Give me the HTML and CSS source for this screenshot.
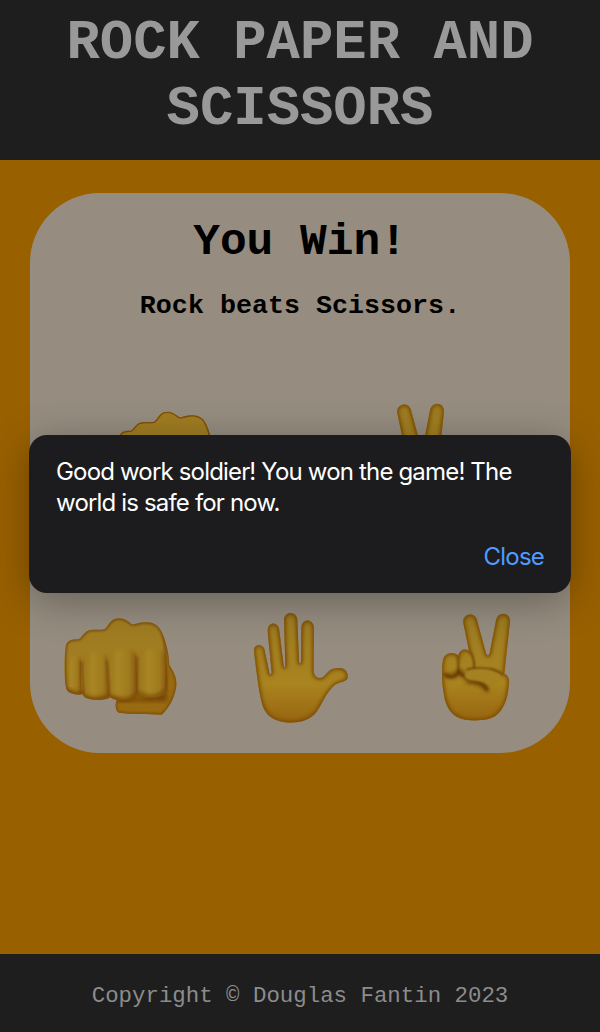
FILE: index.html
```html
<!DOCTYPE html>
<html lang="en">
<head>
<meta charset="utf-8">
<title>Rock Paper and Scissors</title>
<link rel="stylesheet" href="styles.css">
</head>
<body>
<svg class="defs" aria-hidden="true">
  <defs>
    <linearGradient id="skin" x1="0" y1="0" x2="0" y2="1">
      <stop offset="0" stop-color="#9d7d24"/>
      <stop offset=".65" stop-color="#a9841f"/>
      <stop offset="1" stop-color="#98650f"/>
    </linearGradient>
    <linearGradient id="knuckle" x1="0" y1="0" x2="1" y2="0">
      <stop offset="0" stop-color="#97701a"/>
      <stop offset=".4" stop-color="#a98624"/>
      <stop offset=".75" stop-color="#a07a1e"/>
      <stop offset="1" stop-color="#86540f"/>
    </linearGradient>
    <filter id="soft" x="-20%" y="-20%" width="140%" height="140%"><feGaussianBlur stdDeviation="6"/></filter>
    <filter id="line" x="-50%" y="-20%" width="200%" height="140%"><feGaussianBlur stdDeviation="2.5"/></filter>
    <path id="fist-shape" d="M50 146C50 125 62 117 88 118C96 117 104 96 121 91C138 87 158 91 166 88C176 83 180 64 197 57C218 50 236 62 246 71C255 78 262 68 285 67C315 64 333 79 341 103C350 127 360 156 361 195C372 211 385 235 382 258C377 293 363 321 338 344C296 341 247 344 211 338C198 334 197 306 205 299C196 299 190 297 184 292C170 303 128 301 112 294C105 291 102 286 101 282C86 287 64 283 54 271C45 253 45 173 50 146Z"/>
    <clipPath id="fist-clip"><use href="#fist-shape"/></clipPath>
    <path id="palm-shape" d="M42 156C38 129 73 127 75 155L88 218C89 225 95 223 95 217L83 95C81 65 115 62 118 91L131 198C132 204 136 202 136 196L132 60C132 32 171 32 172 60L177 184C177 192 183 191 183 184L184 84C184 54 221 54 222 84L221 211C222 231 235 239 249 231L267 213C277 202 297 203 306 205C319 209 325 220 323 235C318 247 295 246 281 258C261 276 248 307 231 334C212 359 187 368 149 368C98 366 74 344 65 307C56 273 48 205 42 156Z"/>
    <clipPath id="palm-clip"><use href="#palm-shape"/></clipPath>
    <path id="victory-shape" d="M117 152L100 70C94 43 133 32 141 60L168 159C171 169 176 169 179 159L198 61C203 34 241 35 240 65L223 221C236 225 240 240 236 258C234 295 222 326 199 346C177 364 113 367 83 352C54 337 44 307 40 272C35 245 34 202 39 180C42 156 76 153 85 169C87 148 103 144 117 152Z"/>
    <clipPath id="victory-clip"><use href="#victory-shape"/></clipPath>
    <symbol id="fist" viewBox="0 0 450 390">
      <use href="#fist-shape" fill="url(#skin)"/>
      <g clip-path="url(#fist-clip)">
        <path d="M199 293L350 278L361 190L388 245L358 350L202 345Z" fill="#986b12"/>
        <path d="M201 296C250 297 320 297 353 276V304H202Z" fill="#754207" filter="url(#soft)"/>
        <path d="M48 125C65 112 84 120 97 142V282H48Z" fill="url(#knuckle)"/>
        <path d="M97 142C92 102 128 86 171 106L182 284C165 306 111 304 103 280Z" fill="url(#knuckle)"/>
        <path d="M167 91C180 48 230 45 265 83V280C248 306 196 305 180 282Z" fill="url(#knuckle)"/>
        <path d="M260 88C278 60 325 63 341 97L355 210V269C343 300 276 298 265 278Z" fill="url(#knuckle)"/>
        <path d="M40 50H350V160Q310 130 264 165Q220 125 172 170Q130 140 98 180Q70 160 45 180Z" fill="#a07d21" filter="url(#soft)"/>
        <path d="M98 185L102 282M174 180L182 289M264 172L265 282M346 104L354 200L352 270" fill="none" stroke="#6d3e05" stroke-width="4" filter="url(#line)"/>
        <path d="M51 268Q80 289 101 277M105 289Q145 307 180 287M185 288Q230 314 264 283M267 278Q314 310 352 270" fill="none" stroke="#794707" stroke-width="11" filter="url(#soft)"/>
        <use href="#fist-shape" fill="none" stroke="#80500c" stroke-width="9" filter="url(#line)"/>
      </g>
    </symbol>
    <symbol id="palm" viewBox="0 0 360 390">
      <use href="#palm-shape" fill="url(#skin)"/>
      <g clip-path="url(#palm-clip)">
        <use href="#palm-shape" fill="none" stroke="#80500c" stroke-width="10" filter="url(#soft)"/>
        <use href="#palm-shape" fill="none" stroke="#7d4d0b" stroke-width="5" filter="url(#line)"/>
      </g>
    </symbol>
    <symbol id="victory" viewBox="0 0 300 390">
      <use href="#victory-shape" fill="url(#skin)"/>
      <g clip-path="url(#victory-clip)">
        <path d="M44 220C58 235 80 231 85 211M90 210C96 229 106 230 112 224M108 243C131 247 166 248 171 275" fill="none" stroke="#6b3c05" stroke-width="12" filter="url(#soft)"/>
        <path d="M40 219C48 233 78 236 85 216V169M86 207C88 229 101 229 103 222M117 152Q133 166 133 207M103 229C108 248 158 237 173 271M110 209C132 203 173 204 190 209Q207 214 220 225" fill="none" stroke="#633402" stroke-width="5" filter="url(#line)"/>
        <path d="M112 214C142 205 188 208 208 231C197 263 177 250 160 244C138 240 117 245 108 235C102 226 102 218 112 214Z" fill="#a58121" filter="url(#line)"/>
        <use href="#victory-shape" fill="none" stroke="#80500c" stroke-width="10" filter="url(#soft)"/>
        <use href="#victory-shape" fill="none" stroke="#7d4d0b" stroke-width="5" filter="url(#line)"/>
      </g>
    </symbol>
  </defs>
</svg>
<header class="header"><h1>ROCK PAPER AND SCISSORS</h1></header>
<main class="main">
  <section class="card">
    <h2>You Win!</h2>
    <p class="result">Rock beats Scissors.</p>
    <div class="played">
      <svg class="fist small"><use href="#fist"/></svg>
      <svg class="victory"><use href="#victory"/></svg>
    </div>
    <div class="choices">
      <svg class="fist" role="img" aria-label="Rock"><use href="#fist"/></svg>
      <svg class="palm" role="img" aria-label="Paper"><use href="#palm"/></svg>
      <svg class="victory" role="img" aria-label="Scissors"><use href="#victory"/></svg>
    </div>
  </section>
</main>
<footer class="footer">Copyright © Douglas Fantin 2023</footer>
<div class="dialog" role="alertdialog">
  <p>Good work soldier! You won the game! The<br>world is safe for now.</p>
  <button>Close</button>
</div>
</body>
</html>
```

FILE: styles.css
```css
* { box-sizing: border-box; }
body {
  margin: 0;
  height: 1032px;
  position: relative;
  overflow: hidden;
  display: flex;
  flex-direction: column;
  background: #996000;
  font-family: "Courier New", "Liberation Mono", monospace;
}
h1, h2, p { margin: 0; }
.defs { position: absolute; width: 0; height: 0; }
.header {
  height: 160px;
  padding-top: 11px;
  background: #1e1e1e;
  color: #999;
  text-align: center;
}
h1 { font-size: 55.6px; line-height: 66px; }
.main { flex: 1; padding: 33px 30px 0; }
.card {
  height: 560px;
  border-radius: 70px;
  background: #968d80;
  color: #000;
  text-align: center;
  display: flex;
  flex-direction: column;
}
h2 { font-size: 44.5px; line-height: 50px; margin-top: 24px; }
.result { font-size: 26.7px; line-height: 30px; margin-top: 24px; font-weight: bold; }
.played { display: flex; justify-content: space-between; height: 130px; margin-top: 69px; padding: 0 106px 0 74px; }
.choices { display: flex; justify-content: space-between; height: 130px; margin-top: 80px; padding: 0 40px 0 19px; }
.fist { width: 150px; height: 130px; }
.fist.small { width: 136px; height: 118px; margin-top: 5px; }
.palm { width: 120px; height: 130px; margin-right: 30px; }
.victory { width: 100px; height: 130px; }
.footer {
  height: 78px;
  padding-top: 5px;
  display: flex;
  align-items: center;
  justify-content: center;
  background: #1e1e1e;
  color: #8c8c8c;
  font-size: 22.4px;
}
.dialog {
  position: absolute;
  left: 29px;
  top: 435px;
  width: 542px;
  height: 158px;
  padding: 21px 27px 21px 27px;
  display: flex;
  flex-direction: column;
  justify-content: space-between;
  border-radius: 18px;
  background: #1c1c1e;
  box-shadow: 0 8px 42px rgba(0, 0, 0, .32);
  color: #fff;
  font-family: Inter, sans-serif;
  font-size: 24px;
}
.dialog p { line-height: 31px; letter-spacing: -.83px; white-space: nowrap; }
.dialog button {
  align-self: flex-end;
  padding: 0;
  border: 0;
  background: none;
  color: #509bff;
  font: inherit;
  line-height: 30px;
  letter-spacing: -.8px;
}
```
